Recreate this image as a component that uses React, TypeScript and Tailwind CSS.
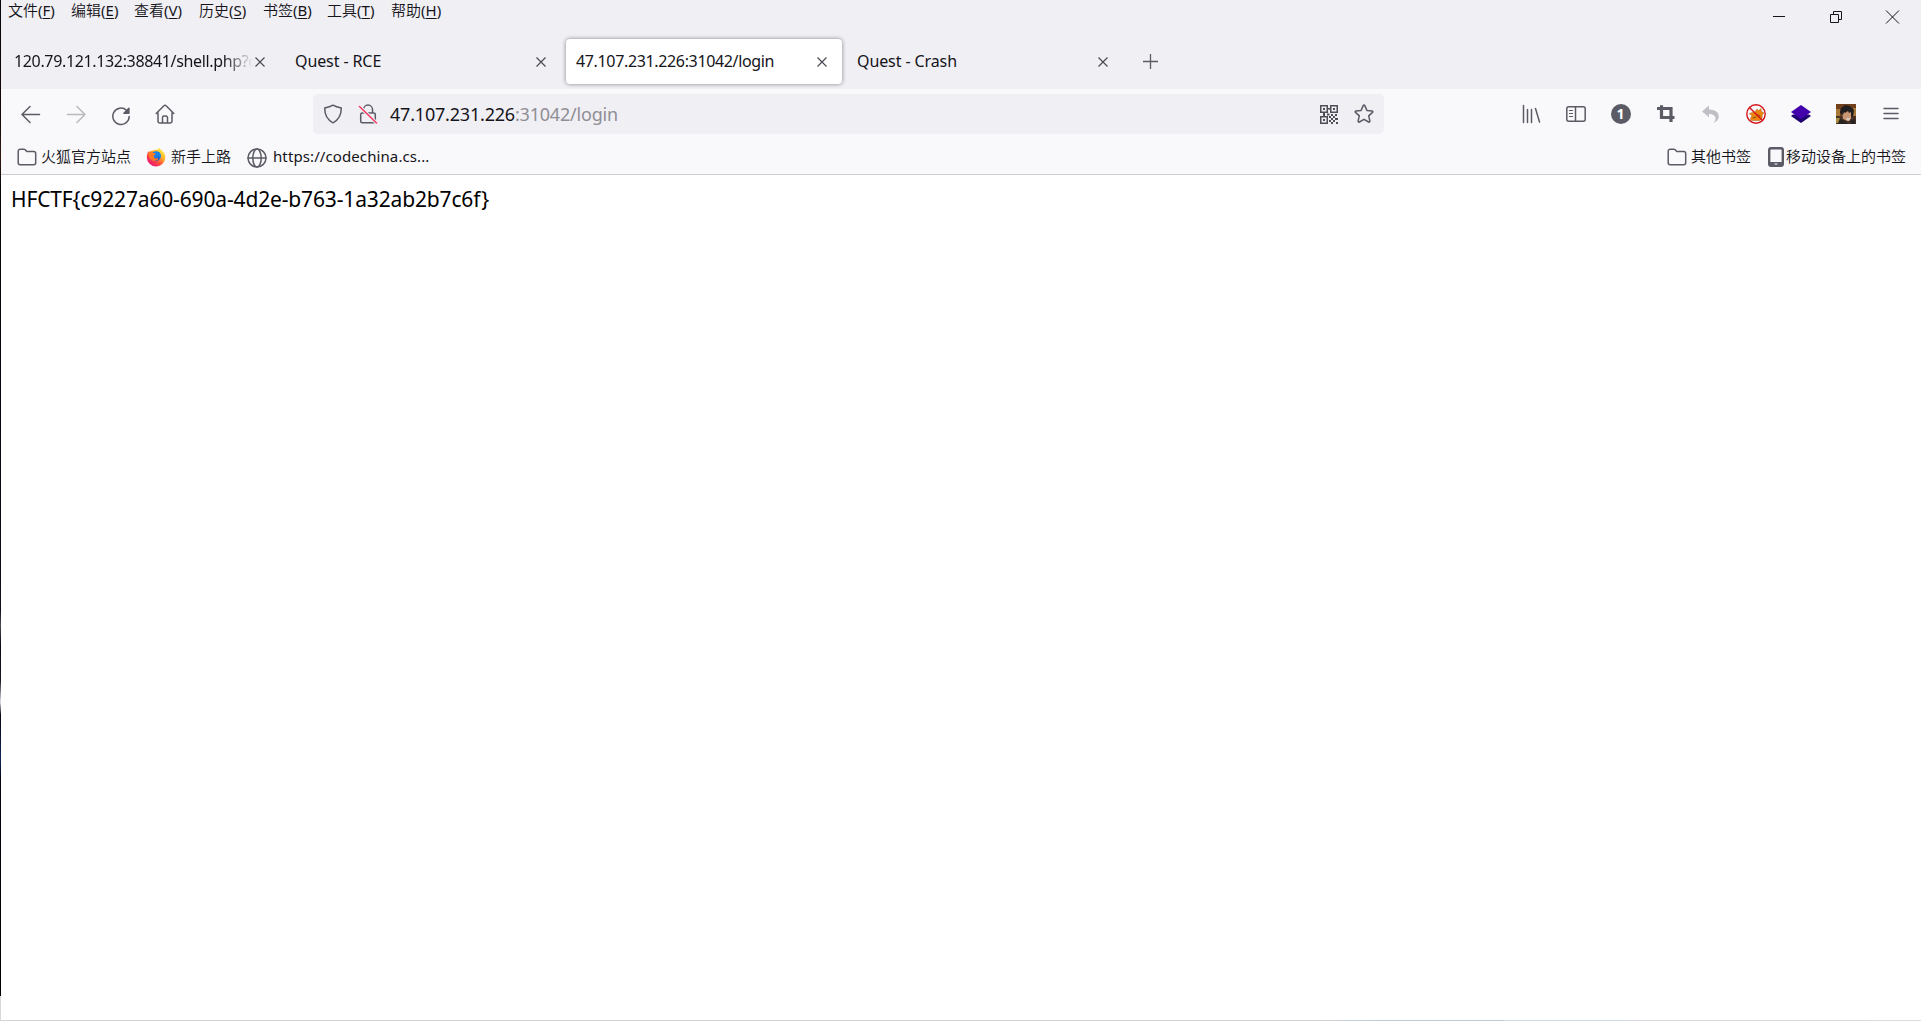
import type { ReactNode } from 'react';

const menus = [
  { label: '文件', hotkey: 'F', width: 'w-[63px]' },
  { label: '编辑', hotkey: 'E', width: 'w-[63px]' },
  { label: '查看', hotkey: 'V', width: 'w-[65px]' },
  { label: '历史', hotkey: 'S', width: 'w-[64px]' },
  { label: '书签', hotkey: 'B', width: 'w-[64px]' },
  { label: '工具', hotkey: 'T', width: 'w-[64px]' },
  { label: '帮助', hotkey: 'H', width: 'w-[64px]' },
];

const tabs = [
  { title: '120.79.121.132:38841/shell.php?c', active: false, tracking: 'tracking-[-0.35px]' },
  { title: 'Quest - RCE', active: false, tracking: 'tracking-[-0.1px]' },
  { title: '47.107.231.226:31042/login', active: true, tracking: 'tracking-[-0.35px]' },
  { title: 'Quest - Crash', active: false, tracking: 'tracking-[-0.1px]' },
];

const Icon = ({ children, className = '' }: { children: ReactNode; className?: string }) => (
  <svg
    viewBox="0 0 20 20"
    className={`size-5 shrink-0 ${className}`}
    fill="none"
    stroke="#5b5b66"
    strokeWidth="1.5"
    strokeLinecap="round"
    strokeLinejoin="round"
  >
    {children}
  </svg>
);

const ToolButton = ({ children }: { children: ReactNode }) => (
  <div className="flex h-10 w-[45px] shrink-0 items-center justify-center">{children}</div>
);

const FolderIcon = () => (
  <Icon>
    <path d="M1.2 15.8V4.2a2 2 0 0 1 2-2h3.6c.6 0 1 .2 1.4.6l1.3 1.4c.3.3.6.4 1 .4h6.2a2 2 0 0 1 2 2v9.2a2 2 0 0 1-2 2H3.2a2 2 0 0 1-2-2Z" />
  </Icon>
);

const FirefoxIcon = () => (
  <svg viewBox="0 0 20 20" className="size-5 shrink-0">
    <defs>
      <linearGradient id="fire" x1="0.85" y1="0.1" x2="0.2" y2="0.95">
        <stop offset="0" stopColor="#fff44f" />
        <stop offset="0.35" stopColor="#ffb02a" />
        <stop offset="0.65" stopColor="#ff4a3a" />
        <stop offset="1" stopColor="#e6127e" />
      </linearGradient>
    </defs>
    <path
      fill="url(#fire)"
      d="M13.6.4c.2 1.5 1.4 2 2.3 3 2.2 1.9 3.5 4 3.5 6.9A9.2 9.2 0 0 1 10 19.4 9.3 9.3 0 0 1 .8 10.2c0-2.8.9-4.9 2.3-6.5l.4 1.5C4.7 4 5.8 3.7 6.8 3.6 9 2.4 12.5 3 13.6.4Z"
    />
    <circle cx="10.2" cy="9" r="4.8" fill="#1481e8" />
    <path fill="#2b39b8" d="M8 10.5c2 1.5 4 1 5-1.2.8 3-1.5 5-3.8 4.4Z" />
    <path fill="#ff7b23" d="M2.5 6.2c2-1.6 4-1.4 4.8-.2l2.3.5c.4.7-.7 1.4-1.9 1.9.1 1.7.5 2.9 2.3 3.1 1 .1 1.7-.3 2.3-.1.3 1-1.9 2.6-4.3 2.3C4.6 13.2 2.5 10 2.5 6.2Z" />
  </svg>
);

const MenuBar = () => (
  <div className="flex h-[34px] justify-between">
    <div className="flex h-5 items-center pl-[7px] text-[15px] leading-5">
      {menus.map(({ label, hotkey, width }) => (
        <div key={label} className={`${width} shrink-0 whitespace-nowrap`}>
          {label}
          <span className="font-normal">
            (<span className="underline underline-offset-2">{hotkey}</span>)
          </span>
        </div>
      ))}
    </div>
    <svg viewBox="0 0 170 34" className="h-[34px] w-[170px]" fill="none" stroke="#15141a" strokeWidth="1">
      <path d="M22 16.5h12" />
      <path d="M79.5 14.5h8v8h-8zM82.5 14.5v-3h8v8h-3" />
      <path d="m135 10.5 13 13M148 10.5l-13 13" />
    </svg>
  </div>
);

const TabStrip = () => (
  <div className="flex h-[55px] items-start gap-[5px] pl-[3px] pt-[5px]">
    {tabs.map(({ title, active, tracking }) => (
      <div
        key={title}
        className={`flex h-[45px] w-[276px] shrink-0 items-center rounded pl-[10px] ${
          active ? 'bg-white shadow-[0_0_4px_rgba(0,0,0,0.45)]' : ''
        }`}
      >
        <div
          className={`-mt-0.5 w-[241px] whitespace-nowrap text-base font-normal leading-6 ${tracking} ${
            title.length > 30 ? '[mask-image:linear-gradient(to_left,transparent,transparent_2px,black_32px)]' : ''
          }`}
        >
          {title}
        </div>
        <svg viewBox="0 0 12 12" className="-ml-px size-3 shrink-0" stroke="#46464f" strokeWidth="1.1">
          <path d="m1.5 1.5 9 9M10.5 1.5l-9 9" />
        </svg>
      </div>
    ))}
    <div className="flex h-[45px] items-center pl-[15px]">
      <svg viewBox="0 0 16 16" className="size-4" stroke="#5b5b66" strokeWidth="1.3">
        <path d="M7.5 0v15M0 7.5h15" />
      </svg>
    </div>
  </div>
);

const UrlBar = () => (
  <div className="flex h-10 w-[1071px] shrink-0 items-center rounded-[5px] bg-[#f0eff4] pl-[10px]">
    <Icon>
      <path d="M10 1.2c2.6 1.5 5 2.2 8.3 2.9 0 6.4-2.3 11.7-8.3 14.7C4 15.8 1.7 10.5 1.7 4.1 5 3.4 7.4 2.7 10 1.2Z" />
    </Icon>
    <Icon className="ml-[15px]">
      <path d="M5.5 9V5.6a4.5 4.5 0 0 1 9 0V9M4.2 9h11.6a1.5 1.5 0 0 1 1.5 1.5v6.8a1.5 1.5 0 0 1-1.5 1.5H4.2a1.5 1.5 0 0 1-1.5-1.5v-6.8A1.5 1.5 0 0 1 4.2 9Z" />
      <path d="m1.5 2.5 17 16.5" stroke="#f0eff4" strokeWidth="3.5" />
      <path d="m1.5 2.5 17 16.5" stroke="#f0395f" strokeWidth="1.5" />
    </Icon>
    <div className="ml-3 grow whitespace-nowrap text-lg font-normal leading-6 tracking-[-0.2px]">
      47.107.231.226<span className="text-[#8f8e95]">:31042/login</span>
    </div>
    <svg viewBox="0 0 18 19" className="mr-4 h-[19px] w-[18px]" fill="#4f4f58">
      <path
        fillRule="evenodd"
        d="M0 0h8v8H0zm1.5 1.5v5h5v-5zM10 0h8v8h-8zm1.5 1.5v5h5v-5zM0 11h8v8H0zm1.5 1.5v5h5v-5z"
      />
      <path d="M3 3h2v2H3zM13 3h2v2h-2zM3 14h2v2H3zM8 3h2v1.5H8zM3 8h2v3H3zM7 8.5h2.5v2H7zM11 9h2v2h-2zM15 9h2v2h-2zM9 11h2v2H9zM13 11h2v2h-2zM11 13h2v2h-2zM15 13h3v2h-3zM9 15h2v2H9zM13 15h2v2h-2zM11 17h2v2h-2zM16 17h2v2h-2z" />
    </svg>
    <Icon className="mr-[10px]">
      <path d="m10.8 1.6 2.1 4.8 5.1.5c.8.1 1.1.9.5 1.5l-3.8 3.5 1.2 5.2c.1.8-.6 1.3-1.3.9L10 15.3 5.4 18c-.7.4-1.4-.1-1.3-.9l1.2-5.2-3.8-3.5c-.6-.6-.3-1.4.5-1.5l5.1-.5 2.1-4.8c.3-.7 1.3-.7 1.6 0Z" />
    </Icon>
  </div>
);

const Avatar = () => (
  <svg viewBox="0 0 20 20" className="size-5">
    <path fill="#70401e" d="M0 0h20v20H0z" />
    <path fill="#a77836" d="M0 5h4v7H0zM17 4h3v8h-3z" />
    <path fill="#493225" d="M0 12h20v8H0z" />
    <path fill="#c99774" d="M6 7h9v7l-3 3-5-2z" />
    <path fill="#211e20" d="M4 9 5 4l4-3 5 1 4 4-1 7-2-1V8l-2 1-1-2-3 2-1-1-1 3z" />
    <path fill="#d8c8b8" d="M11 14h4l-2 3-3-1z" />
    <path fill="#292321" d="m4 15 5 2 3 3H2zM15 16l4-1v5h-5z" />
    <path fill="#a78b3e" d="M0 14h4l-2 5H0z" />
  </svg>
);

const NavBar = () => (
  <div className="flex h-[50px] items-center">
    <div className="flex w-[312px] shrink-0 pl-[7px]">
      <ToolButton>
        <Icon>
          <path d="M18.5 10.5h-17M9 2.5l-8 8 8 8" />
        </Icon>
      </ToolButton>
      <ToolButton>
        <Icon className="opacity-40">
          <path d="M1.5 10.5h17M11 2.5l8 8-8 8" />
        </Icon>
      </ToolButton>
      <ToolButton>
        <Icon className="mt-1">
          <path d="M18.2 10.5A8.2 8.2 0 1 1 15.5 4.2" />
          <path d="M17.9 2.2v5h-5z" fill="#5b5b66" />
        </Icon>
      </ToolButton>
      <ToolButton>
        <Icon className="mr-px">
          <path d="m1.2 9.5 7.7-7.7a1.5 1.5 0 0 1 2.2 0l7.7 7.7M3 8.5v8.800a1.700 1.700 0 0 0 1.700 1.700h10.600a1.700 1.700 0 0 0 1.700-1.700V8.500M7.500 18.500v-5a1.500 1.500 0 0 1 1.500-1.500h2a1.500 1.500 0 0 1 1.500 1.500v5" />
        </Icon>
      </ToolButton>
    </div>
    <UrlBar />
    <div className="ml-auto flex pr-2">
      <ToolButton>
        <Icon>
          <path d="M2.5 1.5v17M6.5 5.5v13M10.5 5.5v13M14.5 4.5l4 13.500" />
        </Icon>
      </ToolButton>
      <ToolButton>
        <Icon>
          <rect x="0.8" y="2.8" width="18.4" height="14.4" rx="2" />
          <path d="M9.5 3v14" />
          <path d="M3.5 6.5h3M3.5 9.5h3M3.5 12.5h3" strokeWidth="1.2" />
        </Icon>
      </ToolButton>
      <ToolButton>
        <div className="flex size-5 items-center justify-center rounded-full bg-[#5b5b66] text-sm font-bold leading-none text-white">
          1
        </div>
      </ToolButton>
      <ToolButton>
        <Icon>
          <path d="M5.5 1.2v12.3h13M1 4.5h14v13.5" strokeWidth="3.2" strokeLinecap="butt" strokeLinejoin="miter" />
        </Icon>
      </ToolButton>
      <ToolButton>
        <Icon>
          <path
            d="m8 1.5-7 6 7 5.8V10c4 0 6.5 1.5 6.5 4.5 0 1.5-.8 3-1.9 4.2 3-1 5.2-3.2 5.2-6.2 0-4.5-4.3-6.9-9.8-7Z"
            fill="#bfbfc6"
            stroke="none"
          />
        </Icon>
      </ToolButton>
      <ToolButton>
        <Icon>
          <path
            d="M3.5 9.5c2-1 4-1 5.5-1.500l2-3 1.500 1.500 2.500-2 .5 3 2.500 1.500-2 2c1 2-.5 4.500-2.500 5.500H5.500C3.500 15.500 5 13 6 12Z"
            fill="#f1840d"
            stroke="#a87632"
            strokeWidth="0.6"
          />
          <path d="m7 14 3-1M11 10.5l3 1.5" stroke="#60421f" strokeWidth="0.8" />
          <circle cx="10" cy="10" r="9.2" stroke="#d41218" strokeWidth="1.4" />
          <path d="m3.5 3.5 13 13" stroke="#d41218" strokeWidth="1.4" />
        </Icon>
      </ToolButton>
      <ToolButton>
        <Icon>
          <path d="m0 12 2-1.5h16l2 1.5-10 7Z" fill="#20006e" stroke="none" />
          <path d="m10 1 10 7-10 7L0 8Z" fill="#4300ad" stroke="none" />
        </Icon>
      </ToolButton>
      <ToolButton>
        <Avatar />
      </ToolButton>
      <ToolButton>
        <Icon>
          <path d="M3 4.5h14M3 9.5h14M3 14.5h14" />
        </Icon>
      </ToolButton>
    </div>
  </div>
);

const BookmarksBar = () => (
  <div className="flex h-[35px] pl-4 pr-[15px] text-[15px] leading-[35px]">
    <div className="flex w-[129px] items-center gap-1">
      <FolderIcon />
      <span>火狐官方站点</span>
    </div>
    <div className="flex w-[101px] items-center gap-[5px]">
      <FirefoxIcon />
      <span>新手上路</span>
    </div>
    <div className="flex items-center gap-[6px]">
      <Icon className="mt-0.5">
        <circle cx="10" cy="10" r="9" />
        <ellipse cx="10" cy="10" rx="4.2" ry="9" />
        <path d="M1 10h18" />
      </Icon>
      <span className="font-normal tracking-[0.1px]">https://codechina.cs...</span>
    </div>
    <div className="ml-auto flex w-[101px] items-center gap-1">
      <FolderIcon />
      <span>其他书签</span>
    </div>
    <div className="flex items-center gap-0.5">
      <svg viewBox="0 0 16 20" className="h-5 w-4" fill="none" stroke="#5b5b66">
        <rect x="1.2" y="1.2" width="13.6" height="17.6" rx="1.8" strokeWidth="2.4" />
        <path d="M2 16.5h12" strokeWidth="3" />
        <path d="M6.5 17h3" stroke="#f9f9fb" />
      </svg>
      <span>移动设备上的书签</span>
    </div>
  </div>
);

export default function App() {
  return (
    <div className="flex h-[1021px] w-[1921px] overflow-hidden bg-white font-['Noto_Sans','Noto_Sans_CJK_SC',sans-serif] font-[350] text-[#15141a]">
      <div className="flex w-px shrink-0 flex-col">
        <div className="h-[996px] bg-[linear-gradient(to_bottom,#080405_0,#120806_120px,#30180f_155px,#050507_190px,#080817_500px,#10101c_610px,#4a4a51_625px,#080b16_645px,#14151f_680px,#e2e0ea_702px,#050510_715px,#12235a_758px,#030510_780px,#000_996px)]" />
        <div className="grow bg-[#d8d8d8]" />
      </div>
      <div className="flex w-[1920px] flex-col">
        <header className="border-b border-[#ccccce] bg-[#f9f9fb]">
          <div className="bg-[#f0eff4]">
            <MenuBar />
            <TabStrip />
          </div>
          <NavBar />
          <BookmarksBar />
        </header>
        <main className="grow pl-[10px] pt-[10px] text-[21px] font-normal leading-7 tracking-[-0.15px] text-black">
          HFCTF&#123;c9227a60-690a-4d2e-b763-1a32ab2b7c6f&#125;
        </main>
        <div className="h-px bg-[linear-gradient(to_right,#d3d3d3_0,#d3d3d3_1300px,#b9c9d8_1400px,#b9c9d8_1502px,#cbdde8_1504px,#d8d8dc_1700px,#dcdcdc_100%)]" />
      </div>
    </div>
  );
}
